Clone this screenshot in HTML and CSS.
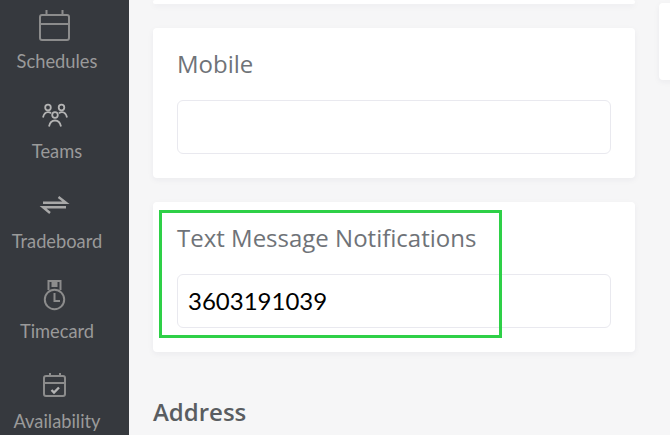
FILE: index.html
```html
<!DOCTYPE html>
<html lang="en">
<head>
<meta charset="utf-8">
<title>Profile</title>
<link rel="stylesheet" href="styles.css">
</head>
<body>
<div class="page">
  <nav class="sidebar">
    <a class="nav-item">
      <svg class="nav-icon" width="32" height="32" viewBox="0 0 32 32" fill="none" stroke="#8c8c8c" stroke-width="2"><rect x="2" y="6" width="29" height="25" rx="2"/><path d="M2 15H31M8.500 1V6M24.500 1V6"/></svg>
      <span>Schedules</span>
    </a>
    <a class="nav-item">
      <svg class="nav-icon" width="32" height="32" viewBox="0 0 32 32" fill="none" stroke="#b4b4b4" stroke-width="1.800"><circle cx="10" cy="8.500" r="2.800"/><circle cx="23.500" cy="8.500" r="2.800"/><circle cx="17" cy="16" r="2.800"/><path d="M5 18.500c.8-3.500 2.500-5.300 5-5.300 1.200 0 2.200.3 3 1M29 18.500c-.8-3.500-2.500-5.300-5-5.300-1.200 0-2.200.3-3 1M11 27.500c.8-4 3-6 6-6s5.200 2 6 6"/></svg>
      <span>Teams</span>
    </a>
    <a class="nav-item">
      <svg class="nav-icon" width="32" height="32" viewBox="0 0 32 32" fill="none" stroke="#a8a8a8" stroke-width="2.400"><path d="M5 13.700H28L20.500 8M28 18.300H5L12 24"/></svg>
      <span>Tradeboard</span>
    </a>
    <a class="nav-item">
      <svg class="nav-icon" width="32" height="32" viewBox="0 0 32 32" fill="none" stroke="#8c8c8c" stroke-width="2"><circle cx="16.500" cy="20.500" r="9.700"/><path d="M10.500 11V2H22.500V11M16.500 14V22H22"/><rect x="13.500" y="3" width="6" height="5" fill="#8c8c8c" stroke="none"/></svg>
      <span>Timecard</span>
    </a>
    <a class="nav-item">
      <svg class="nav-icon" width="32" height="32" viewBox="0 0 32 32" fill="none" stroke="#8c8c8c" stroke-width="2"><rect x="6" y="7" width="21" height="20" rx="2"/><path d="M6 14H27M12 4V7M22 4V7"/><path d="M13.500 21l2.500 2.500 5-5" stroke="#b4b4b4" stroke-width="2.400"/></svg>
      <span>Availability</span>
    </a>
  </nav>
  <main class="content">
    <div class="column">
      <section class="card card-stub"></section>
      <section class="card">
        <h3 class="field-label">Mobile</h3>
        <div class="field-input"></div>
      </section>
      <section class="card">
        <h3 class="field-label">Text Message Notifications</h3>
        <div class="field-input">3603191039</div>
      </section>
      <h2 class="section-title">Address</h2>
    </div>
    <aside class="side-card"></aside>
  </main>
</div>
<div class="highlight"></div>
</body>
</html>
```
FILE: styles.css
```css
* { box-sizing: border-box; }
html, body { margin: 0; height: 100%; overflow: hidden; }
body { position: relative; background: #f6f6f7; font-family: "Open Sans", sans-serif; }
.page { display: flex; height: 435px; overflow: hidden; }
.sidebar { width: 129px; flex: none; background: #36393e; padding: 9px 15px 0 0; display: flex; flex-direction: column; }
.nav-item { height: 90px; flex: none; display: flex; flex-direction: column; align-items: center; font-family: Lato, sans-serif; font-size: 18.3px; line-height: 22px; color: #9a9a9a; white-space: nowrap; }
.nav-icon { display: block; margin: 0 6px 9px 0; flex: none; }
.content { flex: 1; display: flex; align-items: flex-start; padding-left: 24px; gap: 24px; overflow: hidden; }
.column { width: 482px; flex: none; display: flex; flex-direction: column; gap: 24px; }
.card { background: #fff; border-radius: 4px; box-shadow: 0 2px 6px rgba(40, 40, 70, .05); padding: 20px 24px 24px; height: 150px; }
.card-stub { height: 4px; padding: 0; }
.field-label { margin: 0 0 20px; font-size: 24px; line-height: 32px; font-weight: 400; color: #6f7378; }
.field-input { height: 54px; border: 1px solid #e9e9ef; border-radius: 6px; padding: 0 10px 2px; display: flex; align-items: center; font-family: Lato, sans-serif; font-size: 24px; color: #000; }
.section-title { margin: 20px 0 0; font-size: 24px; line-height: 32px; font-weight: 600; color: #5a5d61; }
.side-card { width: 40px; height: 77px; flex: none; margin-top: 3px; background: #fff; border-radius: 4px 0 0 4px; box-shadow: 0 2px 6px rgba(40, 40, 70, .05); }
.highlight { position: absolute; left: 159px; top: 210px; width: 343px; height: 128px; border: 3px solid #2ed047; }
```
